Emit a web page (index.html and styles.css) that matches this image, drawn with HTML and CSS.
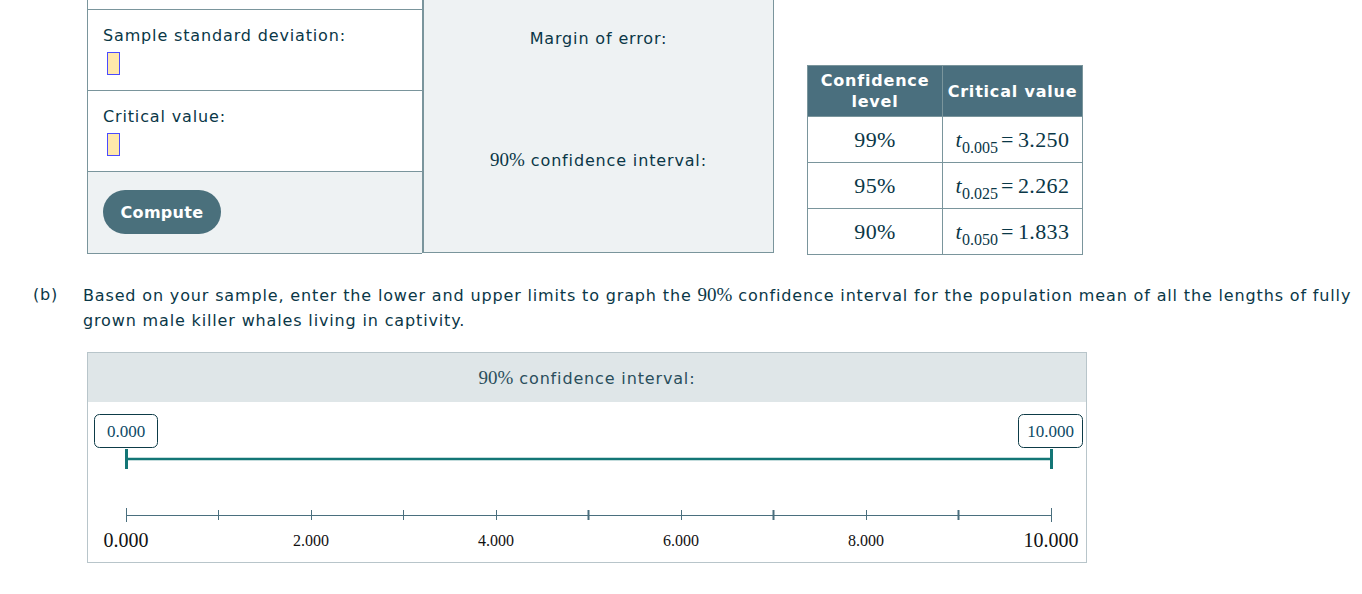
FILE: index.html
```html
<!DOCTYPE html>
<html>
<head>
<meta charset="utf-8">
<link rel="stylesheet" href="styles.css">
</head>
<body>
<div class="top">
  <div class="calc">
    <div class="left">
      <div class="row row-cut"></div>
      <div class="row">
        <div class="lbl">Sample standard deviation:</div>
        <span class="inp"></span>
      </div>
      <div class="row">
        <div class="lbl">Critical value:</div>
        <span class="inp"></span>
      </div>
      <div class="row row-btn">
        <button class="btn">Compute</button>
      </div>
    </div>
    <div class="right">
      <div class="res res-moe">Margin of error:</div>
      <div class="res res-ci"><span class="m">90%</span> confidence interval:</div>
    </div>
  </div>
  <table class="cv">
    <thead>
      <tr><th class="c1">Confidence<br>level</th><th class="c2">Critical value</th></tr>
    </thead>
    <tbody>
      <tr><td>99%</td><td><span class="t">t</span><sub>0.005</sub><span class="eq">=</span>3.250</td></tr>
      <tr><td>95%</td><td><span class="t">t</span><sub>0.025</sub><span class="eq">=</span>2.262</td></tr>
      <tr><td>90%</td><td><span class="t">t</span><sub>0.050</sub><span class="eq">=</span>1.833</td></tr>
    </tbody>
  </table>
</div>

<div class="partb">
  <div class="plabel">(b)</div>
  <div class="ptext">Based on your sample, enter the lower and upper limits to graph the <span class="m">90%</span> confidence interval for the population mean of all the lengths of fully grown male killer whales living in captivity.</div>
</div>

<div class="graph">
  <div class="ghead"><span class="m">90%</span> confidence interval:</div>
  <svg class="gbody" width="998" height="160" viewBox="0 0 998 160">
    <rect x="6.5" y="12.5" width="63" height="33" rx="5" fill="#fff" stroke="#0d3b47"/>
    <text x="38" y="35" class="bx">0.000</text>
    <rect x="930.5" y="12.5" width="64" height="33" rx="5" fill="#fff" stroke="#0d3b47"/>
    <text x="962.5" y="35" class="bx">10.000</text>
    <line x1="38" y1="57" x2="963" y2="57" stroke="#137676" stroke-width="2.5"/>
    <line x1="38.5" y1="47" x2="38.5" y2="67" stroke="#137676" stroke-width="3"/>
    <line x1="963.5" y1="47" x2="963.5" y2="67" stroke="#137676" stroke-width="3"/>
    <line x1="38" y1="113.5" x2="963" y2="113.5" stroke="#4a6f7e" stroke-width="1"/>
    <g stroke="#4a6f7e">
      <line x1="38.5" y1="106" x2="38.5" y2="120"/>
      <line x1="130.5" y1="108" x2="130.5" y2="118"/>
      <line x1="223.5" y1="108" x2="223.5" y2="118"/>
      <line x1="315.5" y1="108" x2="315.5" y2="118"/>
      <line x1="408.5" y1="108" x2="408.5" y2="118"/>
      <line x1="500.5" y1="108" x2="500.5" y2="118" stroke-width="2"/>
      <line x1="593.5" y1="108" x2="593.5" y2="118"/>
      <line x1="685.5" y1="108" x2="685.5" y2="118" stroke-width="2"/>
      <line x1="778.5" y1="108" x2="778.5" y2="118"/>
      <line x1="870.5" y1="108" x2="870.5" y2="118" stroke-width="2"/>
      <line x1="963.5" y1="106" x2="963.5" y2="120"/>
    </g>
    <text x="38" y="145" class="ax big">0.000</text>
    <text x="223" y="144" class="ax">2.000</text>
    <text x="408" y="144" class="ax">4.000</text>
    <text x="593" y="144" class="ax">6.000</text>
    <text x="778" y="144" class="ax">8.000</text>
    <text x="963" y="145" class="ax big">10.000</text>
  </svg>
</div>
</body>
</html>
```

FILE: styles.css
```css
html, body {
  margin: 0;
  padding: 0;
  background: #fff;
}
body {
  font-family: "DejaVu Sans", Verdana, sans-serif;
  letter-spacing: 0.85px;
  color: #0a3747;
  width: 1362px;
  height: 594px;
  overflow: hidden;
}
.m {
  font-family: "Liberation Serif", "Times New Roman", serif;
  font-size: 19px;
  letter-spacing: 0;
}
.top {
  display: flex;
  align-items: flex-start;
  padding-left: 87px;
}
.calc {
  display: flex;
  width: 687px;
}
.left {
  width: 334px;
  border-left: 1px solid #7a959c;
  border-bottom: 1px solid #7a959c;
}
.row {
  height: 80px;
  border-top: 1px solid #7a959c;
  box-sizing: content-box;
  padding-left: 15px;
}
.row-cut {
  height: 9px;
  border-top: none;
}
.lbl {
  font-size: 16px;
  padding-top: 16px;
  line-height: 20px;
}
.inp {
  display: block;
  width: 11px;
  height: 21px;
  margin-top: 6px;
  margin-left: 4px;
  background: #ffe8ab;
  border: 1px solid #4b4bff;
}
.row-btn {
  background: #eef2f3;
  height: 81px;
}
.btn {
  margin-top: 18px;
  height: 44px;
  width: 118px;
  border: none;
  border-radius: 22px;
  background: #4a707c;
  color: #fff;
  font-family: "DejaVu Sans", Verdana, sans-serif;
  font-weight: bold;
  font-size: 16px;
  letter-spacing: 0.3px;
  padding: 0;
}
.right {
  width: 349px;
  height: 252px;
  background: #eef2f3;
  border-left: 2px solid #7a959c;
  border-right: 1px solid #7a959c;
  border-bottom: 1px solid #7a959c;
  text-align: center;
  font-size: 16px;
}
.res-moe {
  padding-top: 29px;
  line-height: 20px;
}
.res-ci {
  padding-top: 100px;
  line-height: 22px;
}
.cv {
  margin-left: 33px;
  margin-top: 65px;
  border-collapse: collapse;
  font-family: "Liberation Serif", "Times New Roman", serif;
  letter-spacing: 0.4px;
  color: #0a3747;
}
.cv th {
  background: #4a6f7e;
  color: #fff;
  font-family: "DejaVu Sans", Verdana, sans-serif;
  font-weight: bold;
  font-size: 16px;
  letter-spacing: 0.8px;
  line-height: 21px;
  height: 51px;
  padding: 0 4px;
  border: 1px solid #7a959c;
  box-sizing: border-box;
}
.cv th.c1 { width: 135px; }
.cv th.c2 { width: 140px; }
.cv td {
  height: 46px;
  border: 1px solid #7a959c;
  text-align: center;
  font-size: 22px;
  padding: 0;
  box-sizing: border-box;
}
.cv td .t {
  font-style: italic;
}
.cv sub {
  font-size: 16px;
  letter-spacing: 0;
  vertical-align: -6px;
  line-height: 0;
}
.cv .eq {
  margin: 0 4px 0 3px;
}
.partb {
  display: flex;
  margin-top: 27px;
  font-size: 16px;
  line-height: 25px;
}
.plabel {
  width: 50px;
  padding-left: 33px;
  box-sizing: content-box;
}
.ptext {
  width: 1275px;
}
.graph {
  margin-left: 87px;
  margin-top: 19px;
  width: 998px;
  border: 1px solid #b8c5ca;
}
.ghead {
  height: 49px;
  background: #dfe6e8;
  text-align: center;
  font-size: 16px;
  line-height: 50px;
  color: #2a4e5c;
}
.gbody {
  display: block;
}
.bx {
  font-family: "Liberation Serif", "Times New Roman", serif;
  font-size: 17px;
  letter-spacing: 0;
  fill: #0d4a66;
  text-anchor: middle;
}
.ax {
  font-family: "Liberation Serif", "Times New Roman", serif;
  font-size: 16px;
  letter-spacing: 0;
  fill: #111;
  text-anchor: middle;
}
.ax.big {
  font-size: 20px;
}
```
